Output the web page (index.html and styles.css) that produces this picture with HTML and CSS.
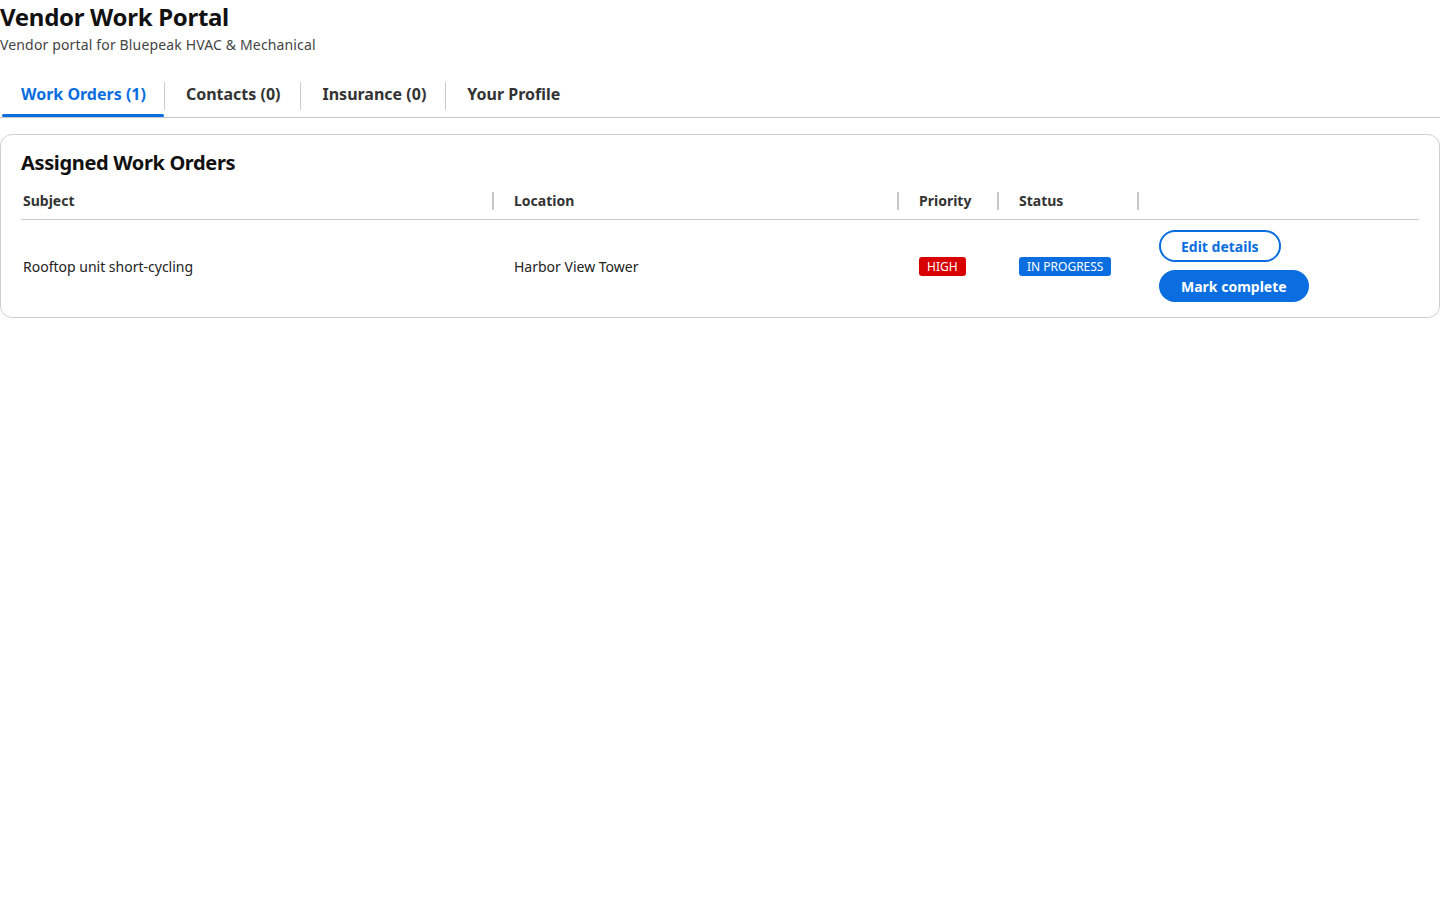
FILE: index.html
```html
<!DOCTYPE html>
<html lang="en">
<head>
  <meta charset="UTF-8" />
  <meta name="viewport" content="width=device-width, initial-scale=1" />
  <title>Vendor Work Portal</title>
  <link rel="stylesheet" href="styles.css">
</head>
<body>

  <div class="page-head">
    <h1>Vendor Work Portal</h1>
    <p class="subtitle">Vendor portal for Bluepeak HVAC &amp; Mechanical</p>
  </div>

  <div class="tabs">
    <button class="tab active">Work Orders (1)</button>
    <button class="tab">Contacts (0)</button>
    <button class="tab">Insurance (0)</button>
    <button class="tab">Your Profile</button>
  </div>

  <div class="card">
    <h2>Assigned Work Orders</h2>

    <table class="orders">
      <colgroup>
        <col class="col-subject">
        <col class="col-location">
        <col class="col-priority">
        <col class="col-status">
        <col class="col-actions">
      </colgroup>
      <thead>
        <tr>
          <th>Subject</th>
          <th>Location</th>
          <th>Priority</th>
          <th>Status</th>
          <th></th>
        </tr>
      </thead>
      <tbody>
        <tr>
          <td>Rooftop unit short-cycling</td>
          <td>Harbor View Tower</td>
          <td><span class="badge badge-high">HIGH</span></td>
          <td><span class="badge badge-progress">IN PROGRESS</span></td>
          <td>
            <div class="actions">
              <button class="btn btn-outline">Edit details</button>
              <button class="btn btn-primary">Mark complete</button>
            </div>
          </td>
        </tr>
      </tbody>
    </table>
  </div>

</body>
</html>
```

FILE: styles.css
```css
body {
  margin: 0;
  padding: 0;
  background-color: #ffffff;
  color: #111;
  font-family: "Noto Sans", "Open Sans", Arial, sans-serif;
}
.page-head h1 {
  margin: 0;
  padding-top: 1px;
  font-size: 24px;
  line-height: 32px;
  font-weight: 700;
  letter-spacing: -0.3px;
  color: #111;
}
.subtitle {
  margin: 2px 0 0;
  font-size: 14px;
  line-height: 20px;
  letter-spacing: 0.15px;
  color: #444;
}
.tabs {
  display: flex;
  margin-top: 21px;
  border-bottom: 1px solid #c8c8c8;
}
.tab {
  position: relative;
  background: none;
  border: none;
  font-family: inherit;
  font-size: 16px;
  font-weight: 700;
  color: #333;
  padding: 7px 19px 12px 22px;
  margin: 0;
  cursor: pointer;
}
.tab + .tab::before {
  content: "";
  position: absolute;
  left: 0;
  top: 6px;
  height: 28px;
  border-left: 1px solid #c8c8c8;
}
.tab.active {
  color: #0a6ee0;
  margin-left: 2px;
  padding-left: 19px;
  padding-right: 18px;
}
.tab:nth-child(2) {
  padding-right: 20px;
}
.tab.active::after {
  content: "";
  position: absolute;
  left: 0;
  right: 0;
  bottom: 0;
  height: 3px;
  border-radius: 2px;
  background-color: #0a6ee0;
}
.card {
  margin-top: 16px;
  border: 1px solid #cfcfcf;
  border-radius: 12px;
  padding: 14px 20px 6px;
}
.card h2 {
  margin: 0 0 6px;
  font-size: 20px;
  line-height: 28px;
  font-weight: 700;
  letter-spacing: -0.35px;
  color: #111;
}
.orders {
  width: 100%;
  table-layout: fixed;
  border-collapse: collapse;
  font-size: 14px;
}
.col-subject { width: 473px; }
.col-location { width: 405px; }
.col-priority { width: 100px; }
.col-status { width: 140px; }
.orders th {
  position: relative;
  text-align: left;
  font-weight: 700;
  color: #333;
  padding: 8px 20px 9px;
  border-bottom: 1px solid #c8c8c8;
}
.orders th:first-child,
.orders td:first-child {
  padding-left: 2px;
}
.orders th:not(:last-child)::after {
  content: "";
  position: absolute;
  right: 0;
  top: 9px;
  height: 18px;
  border-right: 2px solid #c8c8c8;
}
.orders td {
  padding: 10px 20px 9px;
  color: #222;
  vertical-align: middle;
  white-space: nowrap;
}
.badge {
  display: inline-block;
  font-size: 12px;
  line-height: 19px;
  padding: 0 8px;
  border-radius: 3px;
  color: #fff;
}
.badge-high {
  background-color: #d90000;
}
.badge-progress {
  background-color: #0a6ee0;
}
.actions {
  display: flex;
  flex-direction: column;
  align-items: flex-start;
  gap: 8px;
}
.btn {
  font-family: inherit;
  font-size: 14px;
  font-weight: 700;
  height: 32px;
  padding: 0 20px;
  border-radius: 16px;
  white-space: nowrap;
  cursor: pointer;
}
.btn-outline {
  background-color: #fff;
  color: #0a6ee0;
  border: 2px solid #0a6ee0;
}
.btn-primary {
  background-color: #0a6ee0;
  color: #fff;
  border: 2px solid #0a6ee0;
}
```
